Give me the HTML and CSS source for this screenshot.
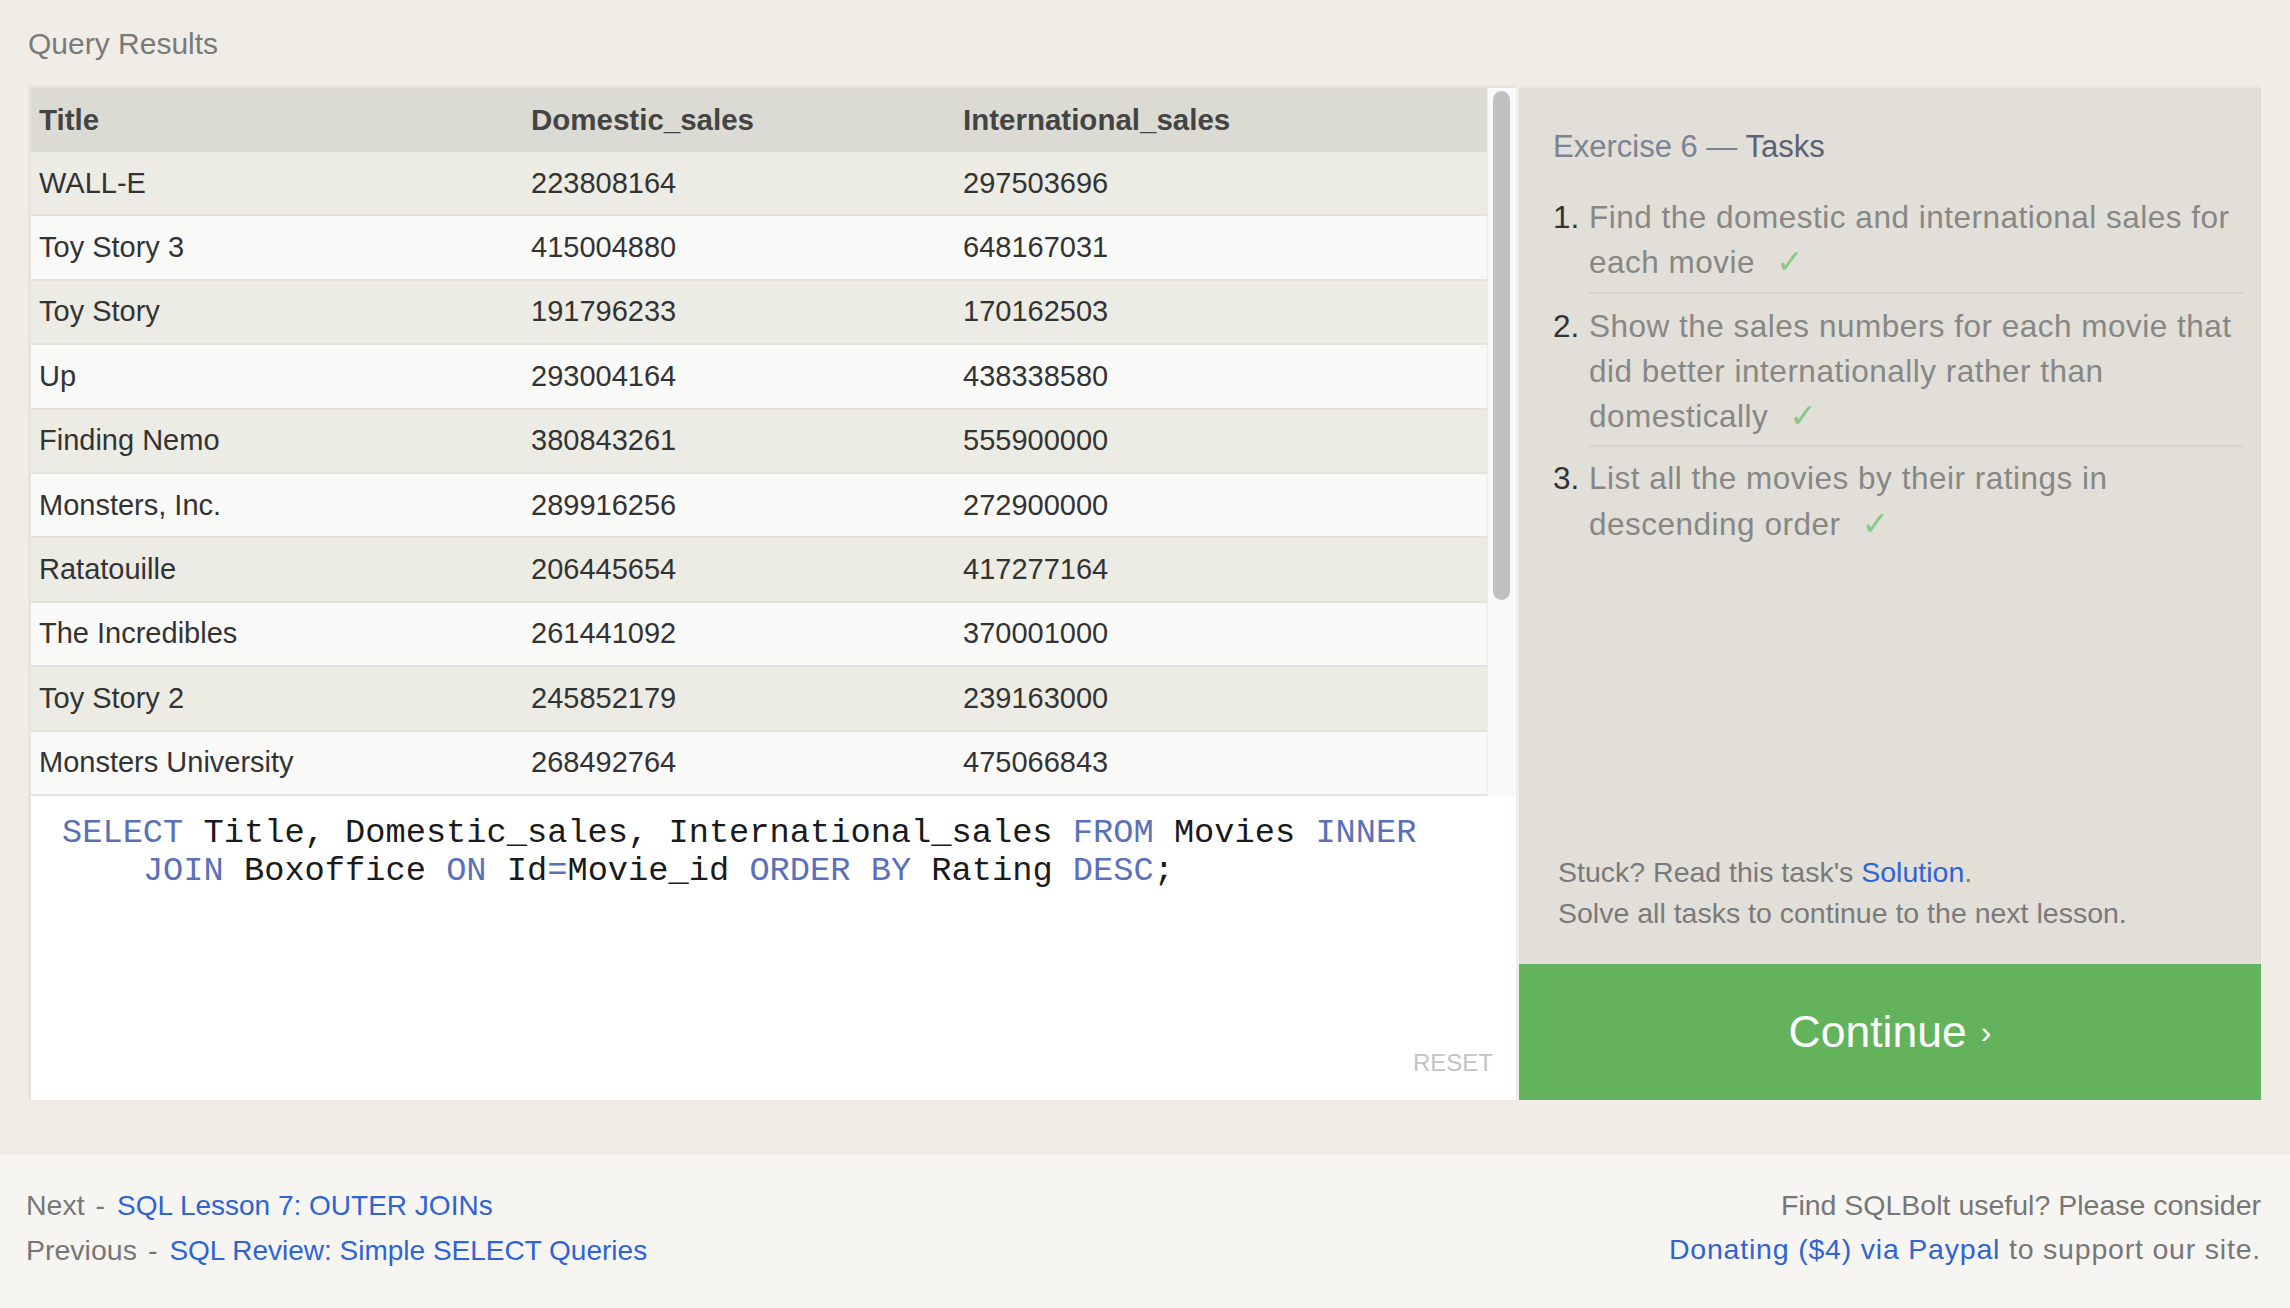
FILE: index.html
```html
<!DOCTYPE html>
<html lang="en">
<head>
<meta charset="utf-8">
<title>SQLBolt - Exercise 6</title>
<link rel="stylesheet" href="styles.css">
</head>
<body>
<div class="page">
  <div class="section-title">Query Results</div>
  <div class="workspace">
    <div class="left">
      <div class="results">
        <div class="grid">
          <div class="row head"><div>Title</div><div>Domestic_sales</div><div>International_sales</div></div>
          <div class="row"><div>WALL-E</div><div>223808164</div><div>297503696</div></div>
          <div class="row"><div>Toy Story 3</div><div>415004880</div><div>648167031</div></div>
          <div class="row"><div>Toy Story</div><div>191796233</div><div>170162503</div></div>
          <div class="row"><div>Up</div><div>293004164</div><div>438338580</div></div>
          <div class="row"><div>Finding Nemo</div><div>380843261</div><div>555900000</div></div>
          <div class="row"><div>Monsters, Inc.</div><div>289916256</div><div>272900000</div></div>
          <div class="row"><div>Ratatouille</div><div>206445654</div><div>417277164</div></div>
          <div class="row"><div>The Incredibles</div><div>261441092</div><div>370001000</div></div>
          <div class="row"><div>Toy Story 2</div><div>245852179</div><div>239163000</div></div>
          <div class="row"><div>Monsters University</div><div>268492764</div><div>475066843</div></div>
        </div>
        <div class="scrollbar"><div class="thumb"></div></div>
      </div>
      <div class="editor">
        <div class="code"><span class="kw">SELECT</span> Title, Domestic_sales, International_sales <span class="kw">FROM</span> Movies <span class="kw">INNER</span>
    <span class="kw">JOIN</span> Boxoffice <span class="kw">ON</span> Id<span class="kw">=</span>Movie_id <span class="kw">ORDER BY</span> Rating <span class="kw">DESC</span>;</div>
        <div class="reset">RESET</div>
      </div>
    </div>
    <div class="right">
      <div class="tasks">
        <h2 class="tasks-title"><span class="ex">Exercise 6 —</span> Tasks</h2>
        <ol class="task-list">
          <li><span class="num">1.</span><span class="txt">Find the domestic and international sales for each movie<span class="check">✓</span></span></li>
          <li><span class="num">2.</span><span class="txt">Show the sales numbers for each movie that did better internationally rather than domestically<span class="check">✓</span></span></li>
          <li><span class="num">3.</span><span class="txt last">List all the movies by their ratings in descending order<span class="check">✓</span></span></li>
        </ol>
      </div>
      <div class="help">
        <div>Stuck? Read this task's <a href="#">Solution</a>.</div>
        <div>Solve all tasks to continue to the next lesson.</div>
      </div>
      <div class="continue">Continue <span class="chev">›</span></div>
    </div>
  </div>
</div>
<footer class="footer">
  <div class="foot-left">
    <div>Next<span class="sep">-</span><a href="#">SQL Lesson 7: OUTER JOINs</a></div>
    <div>Previous<span class="sep">-</span><a href="#">SQL Review: Simple SELECT Queries</a></div>
  </div>
  <div class="foot-right">
    <div>Find SQLBolt useful? Please consider</div>
    <div class="donate"><a href="#">Donating ($4) via Paypal</a> to support our site.</div>
  </div>
</footer>
</body>
</html>
```
FILE: styles.css
```css
html, body {
  margin: 0;
  padding: 0;
}
body {
  background: #f0ede6;
  font-family: "Liberation Sans", Arial, sans-serif;
  color: #333;
  width: 2290px;
  height: 1308px;
  overflow: hidden;
}
a {
  color: #2f63d6;
  text-decoration: none;
}
.page {
  padding: 0 29px 0 28px;
}
.section-title {
  height: 85px;
  box-sizing: border-box;
  padding-top: 27px;
  font-size: 30px;
  line-height: 34px;
  color: #7a7a7a;
}
.workspace {
  display: flex;
  height: 1015px;
  gap: 3px;
}
.left {
  width: 1488px;
  display: flex;
  flex-direction: column;
}
.results {
  height: 711px;
  box-sizing: border-box;
  display: flex;
  border-top: 3px solid #e6e4de;
  border-left: 3px solid #e6e4de;
  background: #f9f9f8;
  overflow: hidden;
}
.grid {
  width: 1456px;
  display: flex;
  flex-direction: column;
}
.row {
  display: grid;
  grid-template-columns: 492px 432px 1fr;
  align-items: center;
  height: 64.4px;
  box-sizing: border-box;
  padding-left: 8px;
  border-bottom: 2px solid #e3e2dd;
  font-size: 29px;
  color: #333;
  background: #f9f9f8;
}
.row:nth-child(even) {
  background: #ecebe4;
}
.row.head {
  height: 64px;
  background: #dcdbd3;
  font-weight: bold;
  font-size: 29.5px;
  color: #444;
  border-bottom: none;
}
.scrollbar {
  width: 29px;
  background: #f9f9f9;
  border-left: 1px solid #ececea;
  box-sizing: border-box;
  padding: 3px 0 0 5px;
}
.thumb {
  width: 17px;
  height: 509px;
  border-radius: 9px;
  background: #c1c1c1;
}
.editor {
  flex: 1;
  background: #fff;
  border-left: 3px solid #e6e4de;
  display: flex;
  flex-direction: column;
  padding: 18px 23px 22px 31px;
}
.code {
  white-space: pre;
  font-family: "Liberation Mono", "Courier New", monospace;
  font-size: 33.7px;
  line-height: 38px;
  color: #1a1a1a;
}
.kw {
  color: #5a70b8;
}
.reset {
  margin-top: auto;
  align-self: flex-end;
  font-size: 24px;
  line-height: 30px;
  color: #c3c3c3;
}
.right {
  flex: 1;
  display: flex;
  flex-direction: column;
  background: #e2dfd8;
  border-top: 3px solid #e9e7e1;
}
.tasks {
  padding: 39px 18px 0 34px;
}
.tasks-title {
  margin: 0;
  font-weight: normal;
  font-size: 31px;
  line-height: 40px;
  color: #5a6374;
}
.tasks-title .ex {
  color: #7b8395;
}
.task-list {
  list-style: none;
  margin: 28px 0 0;
  padding: 0;
}
.task-list li {
  display: flex;
  font-size: 31.5px;
  line-height: 45.3px;
}
.num {
  width: 36px;
  flex: none;
  color: #333;
  padding-top: 10px;
}
.txt {
  flex: 1;
  color: #878785;
  letter-spacing: 0.5px;
  padding: 10px 0 6px;
  border-bottom: 2px solid #d7d4cb;
}
.task-list li:first-child .txt,
.task-list li:first-child .num {
  padding-top: 0;
}
.task-list li:last-child .txt,
.task-list li:last-child .num {
  padding-top: 9px;
}
.txt.last {
  border-bottom: none;
}
.check {
  font-family: "DejaVu Sans", sans-serif;
  font-size: 33px;
  line-height: 1;
  color: #86c986;
  margin-left: 21px;
}
.help {
  margin-top: auto;
  padding: 0 18px 30px 39px;
  font-size: 28.5px;
  line-height: 41px;
  color: #7a7a7a;
}
.continue {
  height: 136px;
  flex: none;
  background: #62b35b;
  color: #fff;
  font-size: 44.5px;
  display: flex;
  align-items: center;
  justify-content: center;
  gap: 14px;
}
.chev {
  font-size: 32px;
}
.footer {
  margin-top: 54px;
  height: 154px;
  box-sizing: border-box;
  background: #f6f5f1;
  padding: 29px 29px 0 26px;
  display: flex;
  justify-content: space-between;
  font-size: 28.5px;
  line-height: 44px;
  color: #777;
}
.foot-left a {
  font-size: 28px;
}
.sep {
  margin: 0 12px 0 11px;
}
.foot-right {
  text-align: right;
}
.donate {
  letter-spacing: 0.8px;
}
```
